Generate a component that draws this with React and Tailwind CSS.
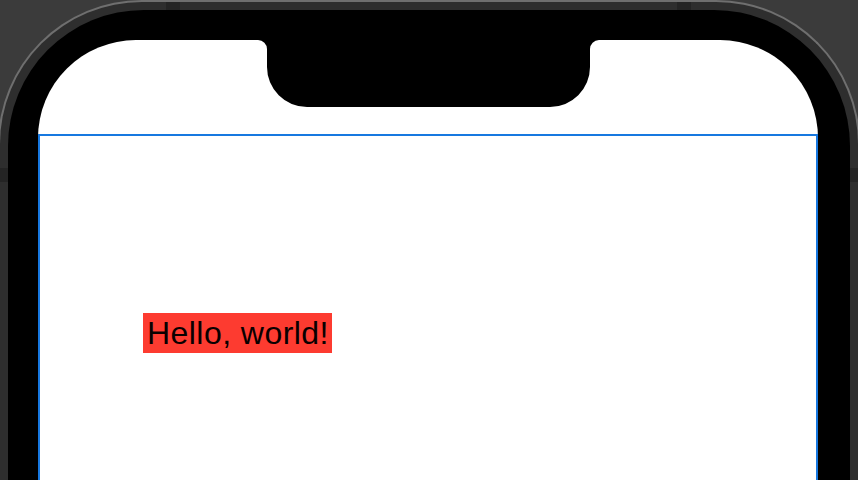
export default function App() {
  return (
    <div className="relative w-[858px] h-[480px] overflow-hidden bg-[#3b3b3b]">
      <div className="-mx-[2px] h-[540px] flex rounded-t-[144px] border-2 border-b-0 border-[#6f6f6f] bg-[#2e2e2e] px-[8px] pt-[8px]">
        <div className="flex-1 flex flex-col rounded-t-[136px] bg-black pt-[30px] pl-[30px] pr-[32px]">
          <div className="flex-1 flex flex-col rounded-t-[98px] bg-white">
            <div className="h-[94px] shrink-0 flex justify-center items-start">
              <svg width="341" height="67" viewBox="0 0 341 67" className="block">
                <path
                  d="M0 0 H341 A9 9 0 0 0 332 9 V27 A40 40 0 0 1 292 67 H49 A40 40 0 0 1 9 27 V9 A9 9 0 0 0 0 0 Z"
                  fill="#000"
                />
              </svg>
            </div>
            <div className="flex-1 border-2 border-b-0 border-[#1778e0] pl-[103px] pt-[177px]">
              <span className="inline-block h-[40px] bg-[#fd3b30] pl-[4px] pr-[3px] font-['Liberation_Sans',Arial,sans-serif] text-[32px] leading-[40px] tracking-[0.45px] text-[#0a0000]">
                Hello, world!
              </span>
            </div>
          </div>
        </div>
      </div>
      <div className="absolute left-[166px] top-[2px] h-[8px] w-[14px] bg-[#242424]" />
      <div className="absolute left-[677px] top-[2px] h-[8px] w-[14px] bg-[#242424]" />
      <div className="absolute left-0 top-[168px] h-[14px] w-[8px] bg-[#242424]" />
      <div className="absolute right-0 top-[168px] h-[14px] w-[8px] bg-[#242424]" />
    </div>
  );
}
